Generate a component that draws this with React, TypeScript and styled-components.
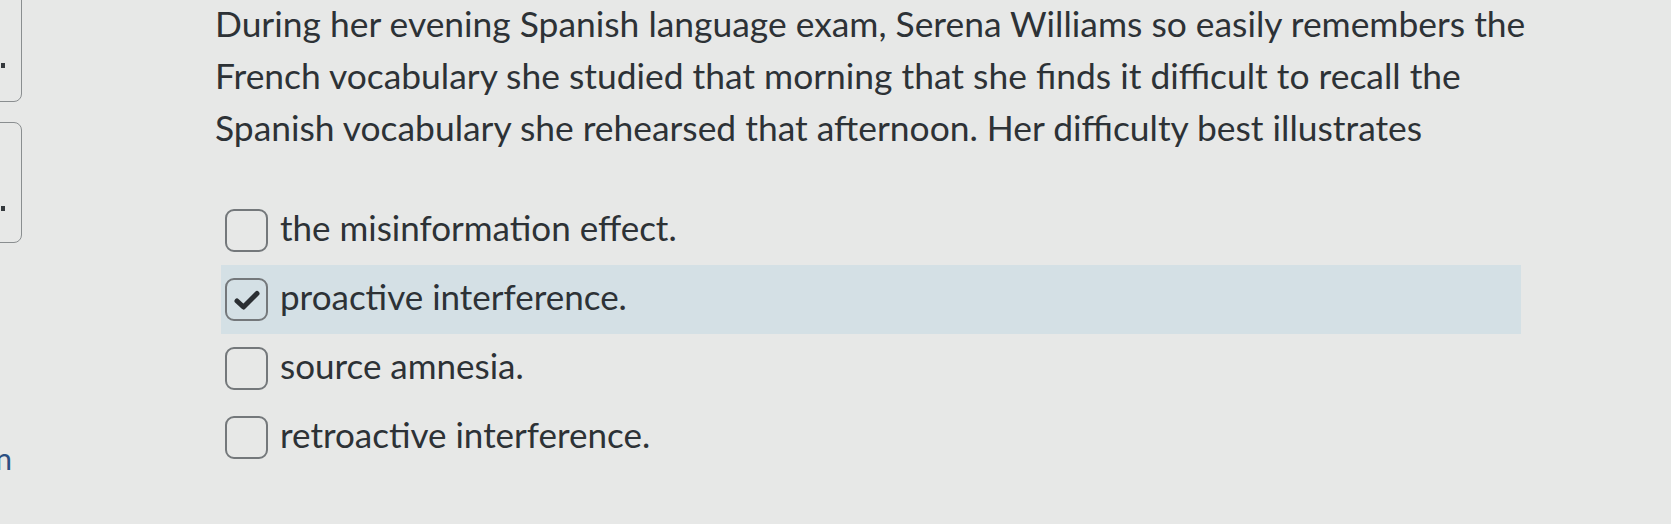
import styled, { createGlobalStyle } from "styled-components";

const GlobalStyle = createGlobalStyle`
    html, body {
        margin: 0;
        padding: 0;
        background: #e7e8e7;
    }
    body {
        font-family: Lato, "Noto Sans", sans-serif;
        color: #2d3236;
    }
`;

const Page = styled.div`
    display: flex;
    width: 1671px;
    height: 524px;
    overflow: hidden;
`;

// 왼쪽 잘린 사이드바
const Sidebar = styled.div`
    width: 25px;
    flex-shrink: 0;
    overflow: hidden;
    display: flex;
    flex-direction: column;
`;
const NavCard = styled.div<{ $height: number; $top: number; $dot: number }>`
    margin-top: ${props => props.$top}px;
    margin-left: -200px;
    width: 222px;
    height: ${props => props.$height}px;
    border: 1.5px solid #8a8e90;
    border-radius: 8px;
    box-sizing: border-box;
    padding-left: 200px;
    padding-top: ${props => props.$dot}px;
`;
const Dot = styled.span`
    display: block;
    width: 4px;
    height: 5px;
    background: #35393d;
`;
const SideLink = styled.div`
    margin-top: auto;
    margin-bottom: 48px;
    margin-right: 13px;
    text-align: right;
    white-space: nowrap;
    direction: rtl;
    font-size: 30px;
    color: #2b4f82;
`;

const Main = styled.div`
    margin-left: 190px;
    width: 1340px;
    display: flex;
    flex-direction: column;
`;
const Question = styled.p`
    margin: -2px 0 0 0;
    font-size: 35.4px;
    line-height: 52px;
    white-space: nowrap;
`;
const Options = styled.div`
    margin-top: 42px;
    margin-left: 6px;
    width: 1300px;
    display: flex;
    flex-direction: column;
`;
const Row = styled.label<{ $checked?: boolean }>`
    height: 69px;
    display: flex;
    align-items: center;
    gap: 12px;
    padding-left: 4px;
    background: ${props => (props.$checked ? "#d4e0e5" : "transparent")};
`;
const Box = styled.span`
    width: 43px;
    height: 43px;
    box-sizing: border-box;
    border: 2px solid #74787b;
    border-radius: 9px;
    display: flex;
    align-items: center;
    justify-content: center;
    flex-shrink: 0;
`;
const Label = styled.span`
    font-size: 35px;
    margin-top: -8px;
`;

const OPTIONS = [
    { text: "the misinformation effect.", checked: false },
    { text: "proactive interference.", checked: true },
    { text: "source amnesia.", checked: false },
    { text: "retroactive interference.", checked: false },
];

function Check() {
    return (
        <svg width="28" height="22" viewBox="0 0 28 22">
            <path d="M4 12 L10.5 18 L24 4.5" fill="none" stroke="#2b2f33" strokeWidth="5"
                strokeLinecap="round" strokeLinejoin="round" />
        </svg>
    );
}

export default function App() {
    return (<>
        <GlobalStyle />
        <Page>
            <Sidebar>
                <NavCard $top={-10} $height={112} $dot={72}><Dot /></NavCard>
                <NavCard $top={20} $height={121} $dot={83}><Dot /></NavCard>
                <SideLink>Question</SideLink>
            </Sidebar>
            <Main>
                <Question>
                    During her evening Spanish language exam, Serena Williams so easily remembers the<br />
                    French vocabulary she studied that morning that she finds it difficult to recall the<br />
                    Spanish vocabulary she rehearsed that afternoon. Her difficulty best illustrates
                </Question>
                <Options>
                    {OPTIONS.map(opt =>
                        <Row key={opt.text} $checked={opt.checked}>
                            <Box>{opt.checked && <Check />}</Box>
                            <Label>{opt.text}</Label>
                        </Row>)}
                </Options>
            </Main>
        </Page>
    </>);
}
